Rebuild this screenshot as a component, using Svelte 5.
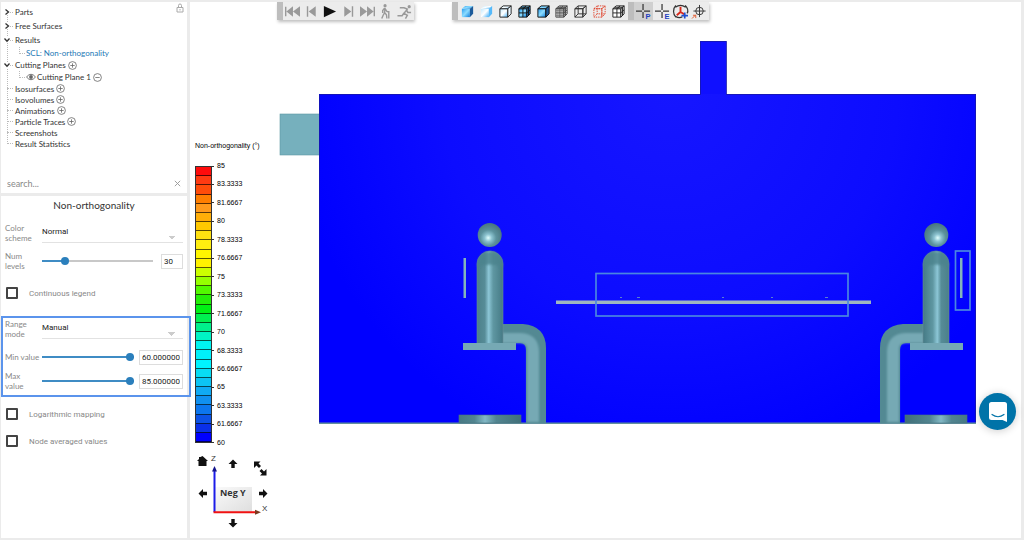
<!-- PostProcessor — result tree, field settings and the 3D viewport -->
<script lang="ts">
  type Row = { label: string; size: string; open?: boolean; add?: boolean; child?: boolean; link?: boolean; eye?: boolean; caret?: boolean };

  const rows: Row[] = [
    { label: 'Parts', size: 'tall', caret: true },
    { label: 'Free Surfaces', size: 'tall', caret: true },
    { label: 'Results', size: 'tall', caret: true, open: true },
    { label: 'SCL: Non-orthogonality', size: 'mid', child: true, link: true },
    { label: 'Cutting Planes', size: 'mid', caret: true, open: true, add: true },
    { label: 'Cutting Plane 1', size: 'mid', child: true, eye: true },
    { label: 'Isosurfaces', size: 'short', add: true },
    { label: 'Isovolumes', size: 'short', add: true },
    { label: 'Animations', size: 'short', add: true },
    { label: 'Particle Traces', size: 'short', add: true },
    { label: 'Screenshots', size: 'short' },
    { label: 'Result Statistics', size: 'short' },
  ];

  // legend, hottest level first
  const levels = [
    '#ff0c0c', '#ff3a12', '#ff4c0a', '#ff7e00', '#ff9a1c', '#ffae08', '#ffc800', '#ffe010', '#ffee10', '#fff600',
    '#fff200', '#ccff00', '#96ff00', '#52f800', '#22ee08', '#00f014', '#00f050', '#00f08c', '#00f4c4', '#00f4f0',
    '#00f0fa', '#00f4ff', '#08dcf4', '#0cc4f4', '#10aaf4', '#1090f0', '#0c76ee', '#0c52e6', '#0a30e8', '#0000ff',
  ];
  const ticks = ['85', '83.3333', '81.6667', '80', '78.3333', '76.6667', '75', '73.3333', '71.6667', '70', '68.3333', '66.6667', '65', '63.3333', '61.6667', '60'];

  const playback = ['First frame', 'Previous frame', 'Play', 'Next frame', 'Last frame', 'Walk', 'Run'];
  const modes = ['Shaded', 'Smooth', 'Outline', 'Shaded mesh', 'Feature edges', 'Mesh', 'Wireframe', 'Points', 'Hidden line'];
  const tools = ['Probe point', 'Probe element', 'Rotation centre', 'Fit target'];

  let search = $state('');
  let scheme = $state('Normal');
  let range = $state('Manual');
  let numLevels = $state(30);
  let minValue = $state(60);
  let maxValue = $state(85);
  let continuous = $state(false);
  let logarithmic = $state(false);
  let averaged = $state(false);
</script>

{#snippet cube(fill: string, side: string, line: string, mesh: boolean)}
  <path d="M2 5h8.500v9H2z" fill={fill} stroke={line} />
  <path d="M2 5l3.500-3H14l-3.500 3z" fill={side === 'none' ? 'none' : fill} stroke={line} />
  <path d="M10.500 5L14 2v8.500L10.500 14z" fill={side} stroke={line} />
  {#if mesh}
    <path d="M2 9.500h8.500L14 6.200M6.300 14V5l3.400-3M4 3.500h8.300v9" fill="none" stroke={line} />
  {/if}
{/snippet}

{#snippet person()}
  <path d="M502 324h21q23 2 23 24v75h-20v-73q0-7-6-7h-18z" fill="#538993" />
  <path d="M500 333h21q17 1 18 18v71h-12v-73q0-6-6-6h-21z" fill="#76a9b4" filter="url(#soft)" />
  <path d="M477 344v-80a13 13 0 0 1 26 0v80z" fill="url(#body)" stroke="#6a8f98" stroke-width=".6" />
  <path d="M477.500 267v-3a12.500 12.500 0 0 1 25 0v3q-12.500-5-25 0z" fill="#4c838d" opacity=".8" filter="url(#soft)" />
  <circle cx="489.700" cy="235" r="12" fill="url(#head)" />
  <rect x="463" y="343" width="53" height="7" fill="#76a9b4" />
  <rect x="459" y="415" width="62" height="8" fill="url(#foot)" stroke="#4c737f" stroke-width=".6" />
  <rect x="463.500" y="258" width="2.500" height="40" fill="#83b4bc" />
{/snippet}

<div class="app">
  <aside>
    <section class="panel tree-panel">
      <svg class="lock" viewBox="0 0 8 10"><path d="M1 4.500h6v4.500H1zM2.500 4.500v-2a1.500 1.500 0 0 1 3 0v2M4 6v1.500" fill="none" stroke="#aaa" /></svg>
      <ul class="tree">
        {#each rows as row}
          <li class={row.size} class:child={row.child}>
            <span class="twig">
              {#if row.caret}
                <svg class="caret" viewBox="0 0 6 6"><path d={row.open ? 'M.5 1.500L3 4.300 5.500 1.500' : 'M1.500.5L4.500 3 1.500 5.500'} fill="none" stroke="#333" stroke-width="1.300" /></svg>
              {/if}
            </span>
            {#if row.eye}
              <svg class="eye" viewBox="0 0 10 8"><path d="M.5 4Q5-1.500 9.500 4 5 9.500.5 4z" fill="none" stroke="#777" /><circle cx="5" cy="4" r="1.900" fill="#666" /></svg>
            {/if}
            {#if row.link}
              <a href="#scl">{row.label}</a>
            {:else}
              <span>{row.label}</span>
            {/if}
            {#if row.add || row.eye}
              <button class="round" aria-label={row.add ? 'Add' : 'Remove'}>
                <svg viewBox="0 0 9 9"><circle cx="4.500" cy="4.500" r="3.900" /><path d={row.add ? 'M2.300 4.500h4.400M4.500 2.300v4.400' : 'M2.300 4.500h4.400'} /></svg>
              </button>
            {/if}
          </li>
        {/each}
      </ul>
      <div class="search">
        <input type="text" aria-label="Search" placeholder="search..." bind:value={search} />
        <button aria-label="Clear search" onclick={() => (search = '')}>
          <svg viewBox="0 0 6 6"><path d="M.7.7l4.600 4.600M5.300.7L.7 5.300" stroke="#999" stroke-width=".8" /></svg>
        </button>
      </div>
    </section>

    <section class="panel settings">
      <h2>Non-orthogonality</h2>
      <div class="field">
        <label for="scheme">Color scheme</label>
        <select id="scheme" bind:value={scheme}><option>Normal</option><option>Inverted</option></select>
      </div>
      <div class="field levels">
        <label for="levels">Num levels</label>
        <input id="levels" type="range" min="2" max="150" bind:value={numLevels} style="--fill: {((numLevels - 2) / 148) * 100}%" />
        <input class="value narrow" type="text" aria-label="Num levels value" value={numLevels} />
      </div>
      <div class="tick first">
        <input id="continuous" type="checkbox" bind:checked={continuous} />
        <label for="continuous">Continuous legend</label>
      </div>

      <div class="highlight">
        <div class="field">
          <label for="range">Range mode</label>
          <select id="range" bind:value={range}><option>Manual</option><option>Automatic</option></select>
        </div>
        <div class="field">
          <label for="min">Min value</label>
          <input id="min" type="range" min="0" max="60" bind:value={minValue} style="--fill: {(minValue / 60) * 100}%" />
          <input class="value" type="text" aria-label="Minimum" value={minValue.toFixed(6)} />
        </div>
        <div class="field last">
          <label for="max">Max<br />value</label>
          <input id="max" type="range" min="0" max="85" bind:value={maxValue} style="--fill: {(maxValue / 85) * 100}%" />
          <input class="value" type="text" aria-label="Maximum" value={maxValue.toFixed(6)} />
        </div>
      </div>

      <div class="tick">
        <input id="log" type="checkbox" bind:checked={logarithmic} />
        <label for="log">Logarithmic mapping</label>
      </div>
      <div class="tick">
        <input id="averaged" type="checkbox" bind:checked={averaged} />
        <label for="averaged">Node averaged values</label>
      </div>
    </section>
  </aside>

  <main>
    <svg class="scene" viewBox="190 2 831 536" role="img" aria-label="Meeting room cutting plane">
      <defs>
        <radialGradient id="room" gradientUnits="userSpaceOnUse" cx="670" cy="90" r="380">
          <stop offset="0" stop-color="#1616ff" /><stop offset=".6" stop-color="#0c0cff" /><stop offset="1" stop-color="#0000ff" />
        </radialGradient>
        <linearGradient id="body">
          <stop offset="0" stop-color="#4c808a" /><stop offset=".3" stop-color="#568c97" /><stop offset=".45" stop-color="#8cc6d6" />
          <stop offset=".62" stop-color="#5f97a2" /><stop offset="1" stop-color="#457a85" />
        </linearGradient>
        <linearGradient id="foot">
          <stop offset="0" stop-color="#477984" /><stop offset=".25" stop-color="#528590" /><stop offset=".42" stop-color="#82b8c5" />
          <stop offset=".6" stop-color="#528590" /><stop offset="1" stop-color="#406f79" />
        </linearGradient>
        <radialGradient id="head" cx=".44" cy=".62" r=".6">
          <stop offset="0" stop-color="#e2ffff" /><stop offset=".25" stop-color="#8cc3d0" /><stop offset=".55" stop-color="#5c929d" /><stop offset="1" stop-color="#4a7780" />
        </radialGradient>
        <filter id="soft"><feGaussianBlur stdDeviation="1" /></filter>
      </defs>
      <rect x="280" y="114" width="40" height="41" fill="#76b0bd" stroke="#5e98a4" stroke-width=".6" />
      <rect x="700" y="41" width="26.500" height="54" fill="#1010ff" />
      <rect x="319" y="94" width="657" height="329" fill="url(#room)" />
      <path d="M319.500 423V94.500h381V41.500h26v53h249V423" fill="none" stroke="#1a1a9c" stroke-width=".7" />
      <path d="M319 423.200h657" stroke="#62909c" stroke-width="1.500" />
      {@render person()}
      <g transform="translate(1426 0) scale(-1 1)">{@render person()}</g>
      <rect x="556" y="300.500" width="315" height="3.500" fill="#9fb6c0" />
      <path d="M620 297.500h2M637 297.500h3M722 297.500h2M771 297.500h2M825 297.500h3" stroke="#5a7fd0" />
      <g fill="none" stroke="#4a86e0" stroke-width="1.700">
        <rect x="596" y="273.500" width="252" height="42.500" />
        <rect x="955.500" y="251" width="14.500" height="59" />
      </g>
    </svg>

    <header>
      <div class="toolbar">
        <span class="grip"></span>
        <div class="group play">
          {#each playback as name, i}
            <button aria-label={name}>
              <svg viewBox="0 0 16 16" fill="#999">
                {#if i === 0}
                  <path d="M0 3h1.500v10H0zM8.500 2.500v11L1.500 8zM16 2.500v11L8.500 8z" />
                {:else if i === 1}
                  <path d="M3 2.500h1.500v11H3zM12.500 2.500v11L5 8z" />
                {:else if i === 2}
                  <path d="M2 2v12L15 8z" fill="#111" />
                {:else if i === 3}
                  <path d="M11.500 2.500H13v11h-1.500zM3.500 2.500v11L11 8z" />
                {:else if i === 4}
                  <path d="M14.500 3H16v10h-1.500zM0 2.500v11L7.500 8zM7.500 2.500v11L14.500 8z" />
                {:else if i === 5}
                  <circle cx="7.500" cy="1.800" r="1.700" />
                  <path d="M7.500 4L7 9.500M7 9l2 2.500.5 4M7 9.500L5.500 12 4 15.500M7 4.500L5 7v2.500M7.500 5L9.500 8 11.500 8.500M11.500 7.500v8" fill="none" stroke="#999" stroke-width="1.500" />
                {:else}
                  <circle cx="13" cy="2.800" r="1.700" />
                  <path d="M3 4h4.500l3.500 1.500-3.500 4.500 3.500 2-2 3.500M7.500 9.500L5.500 12.500H.5M10 6l1.500 3H15" fill="none" stroke="#999" stroke-width="1.600" />
                {/if}
              </svg>
            </button>
          {/each}
        </div>
      </div>

      <div class="toolbar">
        <span class="grip"></span>
        <div class="group modes">
          {#each modes as name, i}
            <button aria-label={name}>
              <svg viewBox="0 0 16 16" stroke-linejoin="round">
                <linearGradient id="ice" x2="1" y2="1"><stop offset="0" stop-color="#2a9df0" /><stop offset=".5" stop-color="#8cdcff" /><stop offset="1" stop-color="#0b7fe0" /></linearGradient>
                <linearGradient id="pale" x2="1" y2="1"><stop offset="0" stop-color="#bfe9ff" /><stop offset=".5" stop-color="#fff" /><stop offset="1" stop-color="#3fb0fa" /></linearGradient>
                {#if i === 0}
                  {@render cube('url(#ice)', '#1c5b9a', 'none', false)}
                {:else if i === 1}
                  {@render cube('url(#pale)', '#55b9fa', 'none', false)}
                {:else if i === 2}
                  {@render cube('url(#pale)', '#eaf6ff', '#222', false)}
                {:else if i === 3}
                  {@render cube('url(#ice)', '#2673b8', '#111', true)}
                {:else if i === 4}
                  {@render cube('url(#ice)', '#1c5b9a', '#111', false)}
                {:else if i === 5}
                  {@render cube('none', 'none', '#444', true)}
                  <path d="M2 7.200h8.500L14 4M2 12h8.500L14 8.500M4.200 14V5l3-3M8.500 14V5l3-3" fill="none" stroke="#555" stroke-width=".7" />
                {:else if i === 6}
                  {@render cube('none', 'none', '#333', false)}
                  <path d="M5.500 2v8.500H14M5.500 10.500L2 14" fill="none" stroke="#333" />
                {:else if i === 7}
                  <g stroke-dasharray="1.500 1">
                    {@render cube('none', 'none', '#e0442e', false)}
                    <path d="M5.500 2v8.500H14M5.500 10.500L2 14" fill="none" stroke="#e0442e" />
                  </g>
                {:else}
                  {@render cube('#fff', '#ddd', '#222', true)}
                {/if}
              </svg>
            </button>
          {/each}
        </div>
        <span class="grip"></span>
        <div class="group tools">
          {#each tools as name, i}
            <button aria-label={name} class:on={i === 0}>
              <svg viewBox="0 0 16 16" fill="none" stroke="#333">
                {#if i < 2}
                  <path d="M0 7.500h6.500M8.500 7.500H15M7.500 0v6.500M7.500 8.500V15" stroke-width="1.300" />
                  <text x="10" y="16" class="mark">{i === 0 ? 'P' : 'E'}</text>
                {:else if i === 2}
                  <path d="M3 1.500C-.5 5 0 11 3 14M13 1.500c3.500 3.500 3.500 6 2 8.500M2.500 3.500q5.500-4 11 0M3 13.500q4 2 7 0" stroke-width="1.300" />
                  <path d="M8 3v5.500L4 12M8 8.500l4 2.500" stroke="#d8291b" stroke-width="2" />
                  <path d="M12.500 9v6.500M9 12.300h7" stroke="#1d4fd0" stroke-width="1.800" />
                {:else}
                  <circle cx="8" cy="7.500" r="4" /><path d="M8 1v13M1.500 7.500h13" /><path d="M0 15.500l4-4M1 12h3v3" stroke="#e05a2e" />
                {/if}
              </svg>
            </button>
          {/each}
        </div>
      </div>
    </header>

    <div class="legend">
      <h3>Non-orthogonality (°)</h3>
      <div class="scale">
        <div class="bar">
          {#each levels as color}
            <span style="background: {color}"></span>
          {/each}
        </div>
        <ol>
          {#each ticks as tick}
            <li>{tick}</li>
          {/each}
        </ol>
      </div>
    </div>

    <svg class="compass" viewBox="192 453 84 80">
      <defs>
        <linearGradient id="face" x2="1" y2="1"><stop offset="0" stop-color="#fafafa" /><stop offset="1" stop-color="#dedede" /></linearGradient>
        <path id="arrow" d="M0-4.500L4.500 0H1.700v4h-3.400V0h-2.800z" />
      </defs>
      <rect x="215" y="487" width="37" height="25" fill="url(#face)" />
      <path d="M214.500 512v-42" stroke="#1c1ce8" stroke-width="2" /><path d="M212 471.500l2.500-5.500 2.500 5.500z" fill="#14148c" />
      <path d="M213.500 512.200H256" stroke="#f01212" stroke-width="2" /><path d="M255 509.700l6 2.500-6 2.500z" fill="#7a3a20" />
      <path d="M202.500 456l5.500 5h-1.500v5h-8v-5H197l2-2v-2h1.500z" fill="#111" />
      <g fill="#111">
        <use href="#arrow" x="233" y="464" />
        <use href="#arrow" transform="translate(233 523) rotate(180)" />
        <use href="#arrow" transform="translate(203 493.500) rotate(-90)" />
        <use href="#arrow" transform="translate(263 493.500) rotate(90)" />
        <path d="M254 461.500h6.500l-2 2 2.500 2.500-2 2-2.500-2.500-2.500 2.500zM266.500 475.500H260l2-2-2.500-2.500 2-2 2.500 2.500 2.500-2.500z" />
      </g>
      <text x="211" y="461" class="axis">Z</text>
      <text x="262" y="511" class="axis">X</text>
      <text x="220" y="496" class="facing">Neg Y</text>
    </svg>

    <button class="chat" aria-label="Open chat">
      <svg viewBox="0 0 18 20"><path d="M2.500 0h13A2.500 2.500 0 0 1 18 2.500V20l-4.500-2h-11A2.500 2.500 0 0 1 0 15.500v-13A2.500 2.500 0 0 1 2.500 0z" fill="#fff" /><path d="M3 12.500q6 4.500 12 0" fill="none" stroke="#0073a8" stroke-width="1.200" stroke-linecap="round" /></svg>
    </button>
  </main>
</div>

<style>
  :global(body) { margin: 0; }

  .app {
    display: flex;
    gap: 3px;
    box-sizing: border-box;
    min-height: 100vh;
    padding: 2px 3px 2px 1px;
    background: #ebebeb;
    font-family: Lato, sans-serif;
    font-size: 8px;
    color: #333;
  }

  button {
    display: flex;
    align-items: center;
    justify-content: center;
    padding: 0;
    border: 0;
    background: none;
  }

  aside {
    display: flex;
    flex-direction: column;
    gap: 3px;
    flex: 0 0 186px;
    min-width: 0;
    z-index: 1;
  }
  .panel { background: #fff; }

  .tree-panel {
    position: relative;
    display: flex;
    flex-direction: column;
    height: 191px;
  }
  .lock { position: absolute; top: 1px; right: 3px; width: 8px; height: 10px; }

  .tree {
    position: relative;
    flex: 1;
    margin: 0;
    padding: 3px 0 0 6px;
    list-style: none;
  }
  .tree::before {
    content: '';
    position: absolute;
    left: 6px;
    top: 10px;
    height: 132px;
    border-left: 1px dotted #bbb;
  }
  .tree li { display: flex; align-items: center; }
  .tall { height: 14px; }
  .mid { height: 12px; }
  .short { height: 11px; }
  .tree .child { padding-left: 12px; }
  .twig {
    position: relative;
    width: 6px;
    margin-right: 2px;
    border-bottom: 1px dotted #bbb;
  }
  .child .twig { width: 5px; height: 6px; margin-right: 1px; margin-bottom: 6px; border-left: 1px dotted #bbb; }
  .caret {
    position: absolute;
    left: -3px;
    top: -3px;
    width: 6px;
    height: 6px;
    background: #fff;
  }
  .eye { width: 10px; height: 8px; margin-right: 1px; }
  .tree a { color: #2378b5; text-decoration: none; }
  .round { margin-left: 2px; }
  .round svg { width: 9px; height: 9px; fill: none; stroke: #666; stroke-width: 0.8; }

  .search { display: flex; align-items: center; height: 20px; padding: 0 6px; }
  .search input {
    flex: 1;
    min-width: 0;
    padding: 0;
    border: 0;
    outline: 0;
    font: 9px Lato, sans-serif;
  }
  .search input::placeholder { color: #888; }
  .search svg { width: 7px; height: 7px; }

  .settings { flex: 1; }
  h2 {
    margin: 0 0 8px;
    font: 10px/19px Lato, sans-serif;
    text-align: center;
    color: #333;
  }
  .field {
    display: flex;
    align-items: center;
    gap: 5px;
    height: 20px;
    margin-bottom: 8px;
    padding: 0 4px;
  }
  .field label {
    flex: 0 0 37px;
    margin-right: -5px;
    line-height: 10px;
    color: #888;
  }
  .field select {
    flex: 1;
    min-width: 0;
    height: 19px;
    padding: 0 0 2px;
    border: 0;
    border-bottom: 1px solid #e2e2e2;
    appearance: none;
    background:
      linear-gradient(to bottom left, #ccc 50%, transparent 50%) right 11px bottom 2px / 4px 4px no-repeat,
      linear-gradient(to bottom right, #ccc 50%, transparent 50%) right 7px bottom 2px / 4px 4px no-repeat;
    font: 8px Roboto, sans-serif;
    color: #222;
  }
  .levels { gap: 8px; margin-bottom: 12px; }
  .levels label { margin-right: -8px; }

  input[type='range'] {
    flex: 1;
    min-width: 0;
    height: 10px;
    margin: 0;
    appearance: none;
    background: linear-gradient(to right, #3f8cc4 var(--fill), #c8c8c8 var(--fill)) center / 100% 2px no-repeat;
  }
  input[type='range']::-webkit-slider-thumb {
    appearance: none;
    width: 8px;
    height: 8px;
    border-radius: 50%;
    background: #2b7fbc;
  }
  .value {
    box-sizing: border-box;
    width: 44px;
    height: 15px;
    padding: 0 2px;
    border: 1px solid #ddd;
    font: 8px Roboto, sans-serif;
    color: #222;
  }
  .narrow { width: 22px; }

  .tick { display: flex; align-items: center; height: 20px; margin: 0 5px 7px; }
  .first { margin-bottom: 13px; }
  .tick input {
    width: 12px;
    height: 12px;
    margin: 0 11px 0 0;
    border: 2px solid #444;
    border-radius: 1px;
    appearance: none;
  }
  .tick input:checked { background: #2b7fbc; }
  .tick label { font-family: Roboto, sans-serif; color: #888; }

  .highlight {
    margin: 0 -4px 7px 0;
    padding: 1px 4px 4px 0;
    border: 2px solid #5b94ec;
  }
  .highlight .field { padding: 0 2px; margin-bottom: 4px; }
  .highlight .field:first-child { margin-bottom: 8px; }
  .highlight .last { margin-bottom: 0; }

  main {
    position: relative;
    flex: 1;
    min-width: 0;
    background: #fff;
  }
  .scene { position: absolute; inset: 0; width: 100%; height: 100%; }

  header {
    position: relative;
    display: flex;
    gap: 38px;
    padding-left: 87px;
  }
  .toolbar {
    display: flex;
    height: 18px;
    background: #ececec;
    box-shadow: 1px 2px 3px rgba(0, 0, 0, 0.25);
  }
  .grip { width: 6px; background: #bdbdbd; }
  .group { display: flex; }
  .group button { flex: 1; }
  .group svg { width: 15px; height: 15px; overflow: visible; }
  .play { width: 131px; }
  .modes { width: 170px; }
  .tools { width: 75px; }
  .on { background: #d0d0d0; }
  .mark { font: bold 8px 'Liberation Sans', sans-serif; fill: #1d3fc0; stroke: none; }

  .legend {
    position: relative;
    width: 80px;
    margin: 121px 0 0 5px;
    font: 7px/10px 'Liberation Sans', sans-serif;
    color: #000;
  }
  .legend h3 { margin: 0 0 15px; font: inherit; white-space: nowrap; }
  .scale { display: flex; align-items: center; height: 277px; }
  .bar {
    display: flex;
    flex-direction: column;
    box-sizing: border-box;
    width: 17px;
    height: 100%;
    border: 1px solid #333;
  }
  .bar span { flex: 1; box-shadow: inset 0 -1px rgba(0, 0, 0, 0.65); }
  ol {
    display: flex;
    flex-direction: column;
    justify-content: space-between;
    height: 287px;
    margin: 0;
    padding: 0;
    list-style: none;
  }
  ol li { display: flex; align-items: center; gap: 3px; }
  ol li::before { content: ''; width: 2px; height: 1px; background: #333; }

  .compass { position: relative; display: block; width: 84px; height: 80px; margin: 10px 0 0 2px; }
  .axis { font: 8px 'Liberation Sans', sans-serif; fill: #333; }
  .facing { font: bold 9px 'Open Sans', sans-serif; fill: #333; }

  .chat {
    position: absolute;
    right: 5px;
    bottom: 108px;
    width: 37px;
    height: 37px;
    border-radius: 50%;
    background: #0073a8;
    box-shadow: 0 1px 8px rgba(0, 0, 0, 0.2);
  }
  .chat svg { width: 18px; height: 20px; }
</style>
